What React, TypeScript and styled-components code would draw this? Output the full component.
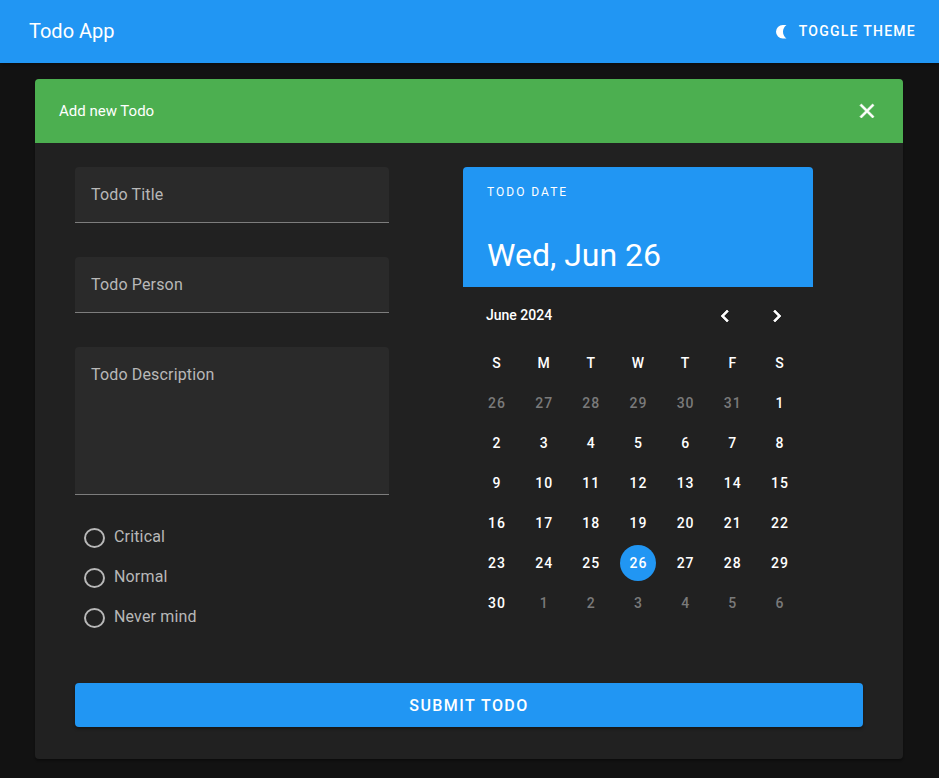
import React, { useState } from "react";
import styled, { createGlobalStyle } from "styled-components";

const BLUE = "#2196f3";
const GREEN = "#4caf50";
const SURFACE = "#212121";

const GlobalStyle = createGlobalStyle`
  *, *::before, *::after { box-sizing: border-box; }
  body {
    margin: 0;
    background: #121212;
    color: #fff;
    font-family: Roboto, "Liberation Sans", sans-serif;
    font-size: 16px;
    line-height: 24px;
  }
  button, input, textarea { font: inherit; color: inherit; }
`;

const Page = styled.div`
  min-height: 100vh;
`;

const AppBar = styled.header`
  display: flex;
  align-items: center;
  justify-content: space-between;
  height: 63px;
  padding: 0 23px 2px 29px;
  background: ${BLUE};
  box-shadow: 0 2px 4px rgba(0, 0, 0, 0.3);
`;

const AppTitle = styled.h1`
  margin: 0;
  font-size: 20px;
  line-height: 28px;
  font-weight: 400;
`;

const PlainButton = styled.button`
  display: inline-flex;
  align-items: center;
  justify-content: center;
  padding: 0;
  border: 0;
  background: transparent;
  cursor: pointer;
`;

const ThemeButton = styled(PlainButton)`
  gap: 8px;
  font-size: 14px;
  font-weight: 500;
  letter-spacing: 0.09em;
  text-transform: uppercase;
`;

const Card = styled.main`
  margin: 16px 36px 16px 35px;
  overflow: hidden;
  border-radius: 4px;
  background: ${SURFACE};
  box-shadow: 0 2px 2px rgba(0, 0, 0, 0.3);
`;

const CardHeader = styled.div`
  display: flex;
  align-items: center;
  justify-content: space-between;
  height: 64px;
  padding: 0 24px;
  background: ${GREEN};
`;

const CardTitle = styled.h2`
  margin: 0;
  font-size: 15px;
  line-height: 24px;
  font-weight: 400;
`;

const Form = styled.form`
  padding: 24px 40px 32px;
`;

const Columns = styled.div`
  display: grid;
  grid-template-columns: minmax(0, 314fr) minmax(350px, 400fr);
  column-gap: 74px;
`;

const Fields = styled.div`
  display: flex;
  flex-direction: column;
`;

const Field = styled.div`
  display: flex;
  margin-bottom: 34px;

  input, textarea {
    width: 100%;
    padding: 16px;
    border: 0;
    border-bottom: 1px solid #7d7d7d;
    border-radius: 4px 4px 0 0;
    outline: 0;
    background: #2a2a2a;
    line-height: 24px;
    letter-spacing: 0.01em;
    resize: none;
  }
  input { height: 56px; }
  textarea { height: 148px; }
  input::placeholder, textarea::placeholder { color: #b8b8b8; opacity: 1; }
  input:focus, textarea:focus { border-bottom-color: #fff; }
`;

const RadioGroup = styled.fieldset`
  margin: 0;
  margin-top: -12px;
  padding: 0;
  border: 0;
`;

const RadioRow = styled.label`
  display: flex;
  align-items: center;
  gap: 9px;
  height: 40px;
  padding-left: 9px;
  color: #b8b8b8;
  letter-spacing: 0.01em;
  cursor: pointer;

  input {
    width: 21px;
    height: 20px;
    margin: 2px 0 0;
    appearance: none;
    border: 2px solid #b8b8b8;
    border-radius: 50%;
  }
  input:checked {
    border-color: ${BLUE};
    background: radial-gradient(${BLUE} 5px, transparent 6px);
  }
`;

const Picker = styled.section`
  width: 350px;
  overflow: hidden;
  border-radius: 4px;
`;

const PickerHeader = styled.div`
  display: flex;
  flex-direction: column;
  justify-content: space-between;
  height: 120px;
  padding: 17px 24px 12px;
  background: ${BLUE};
`;

const PickerLabel = styled.div`
  font-size: 12px;
  line-height: 16px;
  letter-spacing: 2px;
  text-transform: uppercase;
`;

const PickerDate = styled.div`
  font-size: 32px;
  line-height: 40px;
`;

const MonthBar = styled.div`
  display: flex;
  align-items: center;
  justify-content: space-between;
  height: 56px;
  padding: 0 12px 0 23px;
  font-size: 14px;
  font-weight: 500;
`;

const MonthNav = styled.div`
  display: flex;
  gap: 4px;
  padding-top: 2px;
`;

const ArrowButton = styled(PlainButton)`
  width: 48px;
  height: 48px;
`;

const DayGrid = styled.div`
  display: grid;
  grid-template-columns: repeat(7, 36px);
  justify-content: space-between;
  row-gap: 4px;
  padding: 2px 15px 0 16px;
  font-size: 14px;
  line-height: 36px;
  text-align: center;
`;

const Weekday = styled.div`
  padding-right: 1px;
  font-weight: 500;
`;

const DayButton = styled(PlainButton)<{ $outside: boolean; $selected: boolean }>`
  width: 36px;
  height: 36px;
  border-radius: 50%;
  background: ${(p) => (p.$selected ? BLUE : "transparent")};
  color: ${(p) => (p.$outside ? "#7a7a7a" : "#fff")};
  font-weight: 500;
  letter-spacing: 1px;
`;

const SubmitButton = styled(PlainButton)`
  width: 100%;
  height: 44px;
  margin-top: 46px;
  padding-top: 1px;
  border-radius: 4px;
  background: ${BLUE};
  box-shadow: 0 2px 3px rgba(0, 0, 0, 0.35);
  font-size: 16px;
  font-weight: 500;
  letter-spacing: 0.09em;
  text-transform: uppercase;
`;

const Icon = ({ path, size = 24, bold = 0 }: { path: string; size?: number; bold?: number }) => (
  <svg
    width={size}
    height={size}
    viewBox="0 0 24 24"
    fill="currentColor"
    stroke="currentColor"
    strokeWidth={bold}
    aria-hidden="true"
  >
    <path d={path} />
  </svg>
);

const MOON = "M18 4H13A9 9 0 0 0 13 22H18A11 11 0 0 1 18 4Z";
const CLOSE =
  "M19 6.41L17.59 5L12 10.59L6.41 5L5 6.41L10.59 12L5 17.59L6.41 19L12 13.41L17.59 19L19 17.59L13.41 12Z";
const LEFT = "M15.41 16.58L10.83 12L15.41 7.41L14 6L8 12L14 18Z";
const RIGHT = "M8.59 16.58L13.17 12L8.59 7.41L10 6L16 12L10 18Z";

const weekdays = ["S", "M", "T", "W", "T", "F", "S"];
const priorities = ["Critical", "Normal", "Never mind"];
const days = Array.from({ length: 42 }, (_, i) => new Date(2024, 4, 26 + i));

export default function App() {
  const [selected, setSelected] = useState(31);
  const dateText = days[selected].toLocaleDateString("en-US", {
    weekday: "short",
    month: "short",
    day: "numeric",
  });

  return (
    <Page>
      <GlobalStyle />
      <AppBar>
        <AppTitle>Todo App</AppTitle>
        <ThemeButton type="button">
          <Icon path={MOON} size={18} />
          Toggle Theme
        </ThemeButton>
      </AppBar>
      <Card>
        <CardHeader>
          <CardTitle>Add new Todo</CardTitle>
          <PlainButton type="button" aria-label="Close">
            <Icon path={CLOSE} bold={0.7} />
          </PlainButton>
        </CardHeader>
        <Form onSubmit={(e) => e.preventDefault()}>
          <Columns>
            <Fields>
              <Field>
                <input type="text" aria-label="Todo Title" placeholder="Todo Title" />
              </Field>
              <Field>
                <input type="text" aria-label="Todo Person" placeholder="Todo Person" />
              </Field>
              <Field>
                <textarea aria-label="Todo Description" placeholder="Todo Description" />
              </Field>
              <RadioGroup aria-label="Priority">
                {priorities.map((name) => (
                  <RadioRow key={name}>
                    <input type="radio" name="priority" value={name} />
                    <span>{name}</span>
                  </RadioRow>
                ))}
              </RadioGroup>
            </Fields>
            <Picker>
              <PickerHeader>
                <PickerLabel>Todo date</PickerLabel>
                <PickerDate>{dateText}</PickerDate>
              </PickerHeader>
              <MonthBar>
                <span>June 2024</span>
                <MonthNav>
                  <ArrowButton type="button" aria-label="Previous month">
                    <Icon path={LEFT} bold={0.7} />
                  </ArrowButton>
                  <ArrowButton type="button" aria-label="Next month">
                    <Icon path={RIGHT} bold={0.7} />
                  </ArrowButton>
                </MonthNav>
              </MonthBar>
              <DayGrid>
                {weekdays.map((d, i) => (
                  <Weekday key={i}>{d}</Weekday>
                ))}
                {days.map((d, i) => (
                  <DayButton
                    key={i}
                    type="button"
                    $outside={d.getMonth() !== 5}
                    $selected={i === selected}
                    onClick={() => setSelected(i)}
                  >
                    {d.getDate()}
                  </DayButton>
                ))}
              </DayGrid>
            </Picker>
          </Columns>
          <SubmitButton type="submit">Submit Todo</SubmitButton>
        </Form>
      </Card>
    </Page>
  );
}
